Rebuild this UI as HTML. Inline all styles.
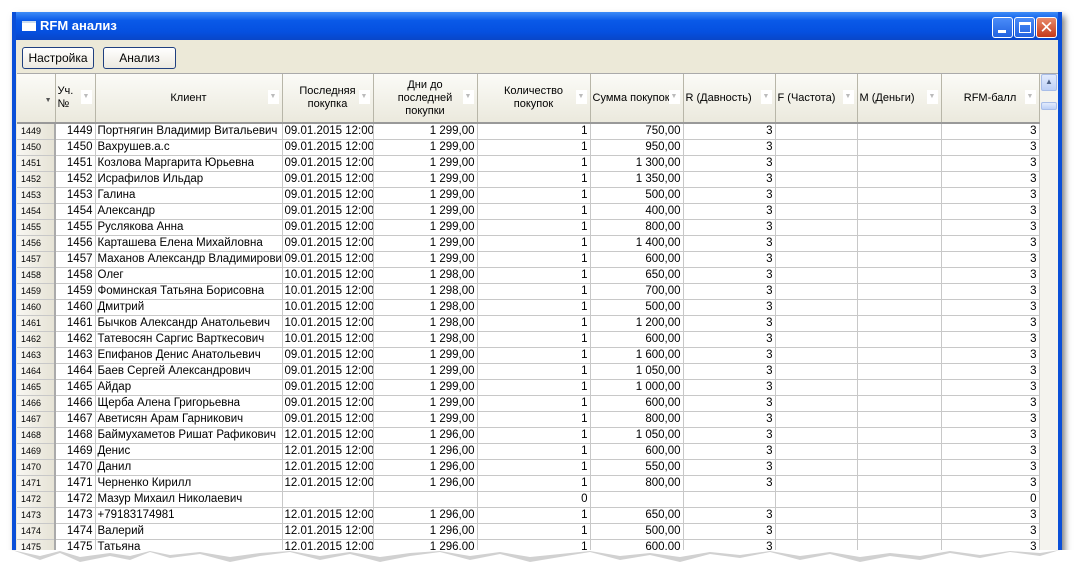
<!DOCTYPE html><html><head><meta charset="utf-8"><style>
*{margin:0;padding:0;box-sizing:border-box}
body{width:1085px;height:585px;background:#fff;position:relative;overflow:hidden;font-family:"Liberation Sans",sans-serif;font-size:11px;color:#000}
.win{position:absolute;left:12px;top:12px;width:1050px;height:545px;background:#ece9d8;border-left:4px solid #0a4fd8;border-right:4px solid #0a4fd8;box-shadow:3px 4px 6px rgba(0,0,0,.5)}
.title{position:absolute;left:0;top:0;right:0;height:28px;background:linear-gradient(#3d8cf7,#0a5ae8 30%,#0550e0 70%,#0846c8);color:#fff;font-weight:bold;font-size:13px;line-height:28px;padding-left:24px}
.ticon{position:absolute;left:6px;top:9px;width:14px;height:10px;background:#fff;border-top:2px solid #cde}
.tb{position:absolute;top:5px;width:21px;height:21px;border:1px solid #fff;border-radius:3px;background:linear-gradient(#4a8cf8,#2262e0)}
.btn{position:absolute;top:35px;height:22px;border:1px solid #1f3f7f;border-radius:3px;background:linear-gradient(#fff,#ece9e0);text-align:center;line-height:20px;font-size:12px}
.grid{position:absolute;left:17px;top:73px;width:1041px;height:480px;background:#fff;overflow:hidden;border-top:1px solid #aaa}
table{border-collapse:collapse;table-layout:fixed;position:absolute;left:0;top:0;width:1022px}
td,th{border-right:1px solid #c8c8c8;border-bottom:1px solid #c8c8c8;height:16px;padding:0 2px;white-space:nowrap;overflow:hidden;font-weight:normal;font-size:11.5px}
th{height:49px;background:linear-gradient(#fbfbf7,#ebe9dd);border-right:1px solid #b8b6a8;border-bottom:2px solid #999;position:relative;line-height:13px;font-size:11px}
th i{position:absolute;right:3px;top:16px;width:11px;height:14px;background:#fff;color:#bbb;font-style:normal;font-size:7px;line-height:14px;text-align:center}
td.h{background:linear-gradient(90deg,#f8f7f2,#e6e3d6);font-size:9px;border-right:2px solid #aaa;padding-left:4px}
.r{text-align:right}
.sb{position:absolute;left:1023px;top:0;width:18px;height:480px;background:#f4f3ee}
.sb b{position:absolute;left:1px;width:16px;height:17px;border:1px solid #a8bde8;border-radius:2px;background:linear-gradient(#e2ebfd,#bdd0f6);color:#4d6185;font-size:8px;text-align:center;line-height:14px}
.tear{position:absolute;left:0;top:550px;width:1085px;height:35px}
</style></head><body>
<div class="win">
<div class="title"><span class="ticon"></span>RFM анализ
<div class="tb" style="right:45px"><div style="position:absolute;left:5px;top:12px;width:8px;height:3px;background:#fff"></div></div>
<div class="tb" style="right:23px"><div style="position:absolute;left:4px;top:4px;width:12px;height:11px;border:1px solid #fff;border-top:3px solid #fff"></div></div>
<div class="tb" style="right:1px;background:linear-gradient(#e88a6a,#c5391a);text-align:center;font-size:17px;line-height:19px;font-weight:normal">✕</div>
</div>
<div class="btn" style="left:6px;width:72px">Настройка</div>
<div class="btn" style="left:87px;width:73px">Анализ</div>
</div>
<div class="grid">
<table>
<colgroup><col style="width:38px"><col style="width:40px"><col style="width:187px"><col style="width:91px"><col style="width:104px"><col style="width:113px"><col style="width:93px"><col style="width:92px"><col style="width:82px"><col style="width:84px"><col style="width:98px"></colgroup>
<tr><th><span style="position:absolute;right:3px;top:20px;font-size:7px;color:#555">▼</span></th><th style="text-align:left">Уч.<br>№<i>▼</i></th><th>Клиент<i>▼</i></th><th>Последняя<br>покупка<i>▼</i></th><th>Дни до<br>последней<br>покупки<i>▼</i></th><th>Количество<br>покупок<i>▼</i></th><th style="text-align:left">Сумма покупок<i>▼</i></th><th style="text-align:left">R (Давность)<i>▼</i></th><th style="text-align:left">F (Частота)<i>▼</i></th><th style="text-align:left">M (Деньги)<i>▼</i></th><th>RFM-балл<i>▼</i></th></tr>
<tr><td class="h">1449</td><td class="r">1449</td><td>Портнягин Владимир Витальевич</td><td>09.01.2015 12:00</td><td class="r">1 299,00</td><td class="r">1</td><td class="r">750,00</td><td class="r">3</td><td></td><td></td><td class="r">3</td></tr>
<tr><td class="h">1450</td><td class="r">1450</td><td>Вахрушев.а.с</td><td>09.01.2015 12:00</td><td class="r">1 299,00</td><td class="r">1</td><td class="r">950,00</td><td class="r">3</td><td></td><td></td><td class="r">3</td></tr>
<tr><td class="h">1451</td><td class="r">1451</td><td>Козлова Маргарита Юрьевна</td><td>09.01.2015 12:00</td><td class="r">1 299,00</td><td class="r">1</td><td class="r">1 300,00</td><td class="r">3</td><td></td><td></td><td class="r">3</td></tr>
<tr><td class="h">1452</td><td class="r">1452</td><td>Исрафилов Ильдар</td><td>09.01.2015 12:00</td><td class="r">1 299,00</td><td class="r">1</td><td class="r">1 350,00</td><td class="r">3</td><td></td><td></td><td class="r">3</td></tr>
<tr><td class="h">1453</td><td class="r">1453</td><td>Галина</td><td>09.01.2015 12:00</td><td class="r">1 299,00</td><td class="r">1</td><td class="r">500,00</td><td class="r">3</td><td></td><td></td><td class="r">3</td></tr>
<tr><td class="h">1454</td><td class="r">1454</td><td>Александр</td><td>09.01.2015 12:00</td><td class="r">1 299,00</td><td class="r">1</td><td class="r">400,00</td><td class="r">3</td><td></td><td></td><td class="r">3</td></tr>
<tr><td class="h">1455</td><td class="r">1455</td><td>Руслякова Анна</td><td>09.01.2015 12:00</td><td class="r">1 299,00</td><td class="r">1</td><td class="r">800,00</td><td class="r">3</td><td></td><td></td><td class="r">3</td></tr>
<tr><td class="h">1456</td><td class="r">1456</td><td>Карташева Елена Михайловна</td><td>09.01.2015 12:00</td><td class="r">1 299,00</td><td class="r">1</td><td class="r">1 400,00</td><td class="r">3</td><td></td><td></td><td class="r">3</td></tr>
<tr><td class="h">1457</td><td class="r">1457</td><td>Маханов Александр Владимирович</td><td>09.01.2015 12:00</td><td class="r">1 299,00</td><td class="r">1</td><td class="r">600,00</td><td class="r">3</td><td></td><td></td><td class="r">3</td></tr>
<tr><td class="h">1458</td><td class="r">1458</td><td>Олег</td><td>10.01.2015 12:00</td><td class="r">1 298,00</td><td class="r">1</td><td class="r">650,00</td><td class="r">3</td><td></td><td></td><td class="r">3</td></tr>
<tr><td class="h">1459</td><td class="r">1459</td><td>Фоминская Татьяна Борисовна</td><td>10.01.2015 12:00</td><td class="r">1 298,00</td><td class="r">1</td><td class="r">700,00</td><td class="r">3</td><td></td><td></td><td class="r">3</td></tr>
<tr><td class="h">1460</td><td class="r">1460</td><td>Дмитрий</td><td>10.01.2015 12:00</td><td class="r">1 298,00</td><td class="r">1</td><td class="r">500,00</td><td class="r">3</td><td></td><td></td><td class="r">3</td></tr>
<tr><td class="h">1461</td><td class="r">1461</td><td>Бычков Александр Анатольевич</td><td>10.01.2015 12:00</td><td class="r">1 298,00</td><td class="r">1</td><td class="r">1 200,00</td><td class="r">3</td><td></td><td></td><td class="r">3</td></tr>
<tr><td class="h">1462</td><td class="r">1462</td><td>Татевосян Саргис Варткесович</td><td>10.01.2015 12:00</td><td class="r">1 298,00</td><td class="r">1</td><td class="r">600,00</td><td class="r">3</td><td></td><td></td><td class="r">3</td></tr>
<tr><td class="h">1463</td><td class="r">1463</td><td>Епифанов Денис Анатольевич</td><td>09.01.2015 12:00</td><td class="r">1 299,00</td><td class="r">1</td><td class="r">1 600,00</td><td class="r">3</td><td></td><td></td><td class="r">3</td></tr>
<tr><td class="h">1464</td><td class="r">1464</td><td>Баев Сергей Александрович</td><td>09.01.2015 12:00</td><td class="r">1 299,00</td><td class="r">1</td><td class="r">1 050,00</td><td class="r">3</td><td></td><td></td><td class="r">3</td></tr>
<tr><td class="h">1465</td><td class="r">1465</td><td>Айдар</td><td>09.01.2015 12:00</td><td class="r">1 299,00</td><td class="r">1</td><td class="r">1 000,00</td><td class="r">3</td><td></td><td></td><td class="r">3</td></tr>
<tr><td class="h">1466</td><td class="r">1466</td><td>Щерба Алена Григорьевна</td><td>09.01.2015 12:00</td><td class="r">1 299,00</td><td class="r">1</td><td class="r">600,00</td><td class="r">3</td><td></td><td></td><td class="r">3</td></tr>
<tr><td class="h">1467</td><td class="r">1467</td><td>Аветисян Арам Гарникович</td><td>09.01.2015 12:00</td><td class="r">1 299,00</td><td class="r">1</td><td class="r">800,00</td><td class="r">3</td><td></td><td></td><td class="r">3</td></tr>
<tr><td class="h">1468</td><td class="r">1468</td><td>Баймухаметов Ришат Рафикович</td><td>12.01.2015 12:00</td><td class="r">1 296,00</td><td class="r">1</td><td class="r">1 050,00</td><td class="r">3</td><td></td><td></td><td class="r">3</td></tr>
<tr><td class="h">1469</td><td class="r">1469</td><td>Денис</td><td>12.01.2015 12:00</td><td class="r">1 296,00</td><td class="r">1</td><td class="r">600,00</td><td class="r">3</td><td></td><td></td><td class="r">3</td></tr>
<tr><td class="h">1470</td><td class="r">1470</td><td>Данил</td><td>12.01.2015 12:00</td><td class="r">1 296,00</td><td class="r">1</td><td class="r">550,00</td><td class="r">3</td><td></td><td></td><td class="r">3</td></tr>
<tr><td class="h">1471</td><td class="r">1471</td><td>Черненко Кирилл</td><td>12.01.2015 12:00</td><td class="r">1 296,00</td><td class="r">1</td><td class="r">800,00</td><td class="r">3</td><td></td><td></td><td class="r">3</td></tr>
<tr><td class="h">1472</td><td class="r">1472</td><td>Мазур Михаил Николаевич</td><td></td><td></td><td class="r">0</td><td></td><td></td><td></td><td></td><td class="r">0</td></tr>
<tr><td class="h">1473</td><td class="r">1473</td><td>+79183174981</td><td>12.01.2015 12:00</td><td class="r">1 296,00</td><td class="r">1</td><td class="r">650,00</td><td class="r">3</td><td></td><td></td><td class="r">3</td></tr>
<tr><td class="h">1474</td><td class="r">1474</td><td>Валерий</td><td>12.01.2015 12:00</td><td class="r">1 296,00</td><td class="r">1</td><td class="r">500,00</td><td class="r">3</td><td></td><td></td><td class="r">3</td></tr>
<tr><td class="h">1475</td><td class="r">1475</td><td>Татьяна</td><td>12.01.2015 12:00</td><td class="r">1 296,00</td><td class="r">1</td><td class="r">600,00</td><td class="r">3</td><td></td><td></td><td class="r">3</td></tr>
</table>
<div class="sb"><b style="top:0">▲</b><b style="top:28px;height:8px"></b></div>
</div>
<svg class="tear" viewBox="0 0 1085 35"><path d="M0 0 H1085 V35 H0Z" fill="#fff"/><path d="M12 0 L40 10 L60 3 L80 12 L110 6 L130 10 L150 2 L170 8 L200 4 L230 12 L260 6 L290 2 L320 10 L350 4 L380 12 L410 6 L440 2 L470 10 L500 4 L530 12 L560 7 L590 2 L620 10 L650 5 L680 12 L710 4 L740 8 L770 2 L800 10 L830 4 L860 12 L890 6 L920 10 L950 3 L980 8 L1010 2 L1040 6 L1060 0 Z" fill="#999" opacity=".45"/><path d="M12 0 L40 6 L60 1 L80 7 L110 3 L130 6 L150 1 L170 5 L200 2 L230 7 L260 3 L290 1 L320 6 L350 2 L380 7 L410 3 L440 1 L470 6 L500 2 L530 7 L560 4 L590 1 L620 6 L650 3 L680 7 L710 2 L740 5 L770 1 L800 6 L830 2 L860 7 L890 3 L920 6 L950 1 L980 5 L1010 1 L1040 3 L1060 0 Z" fill="#fff"/></svg>
</body></html>
